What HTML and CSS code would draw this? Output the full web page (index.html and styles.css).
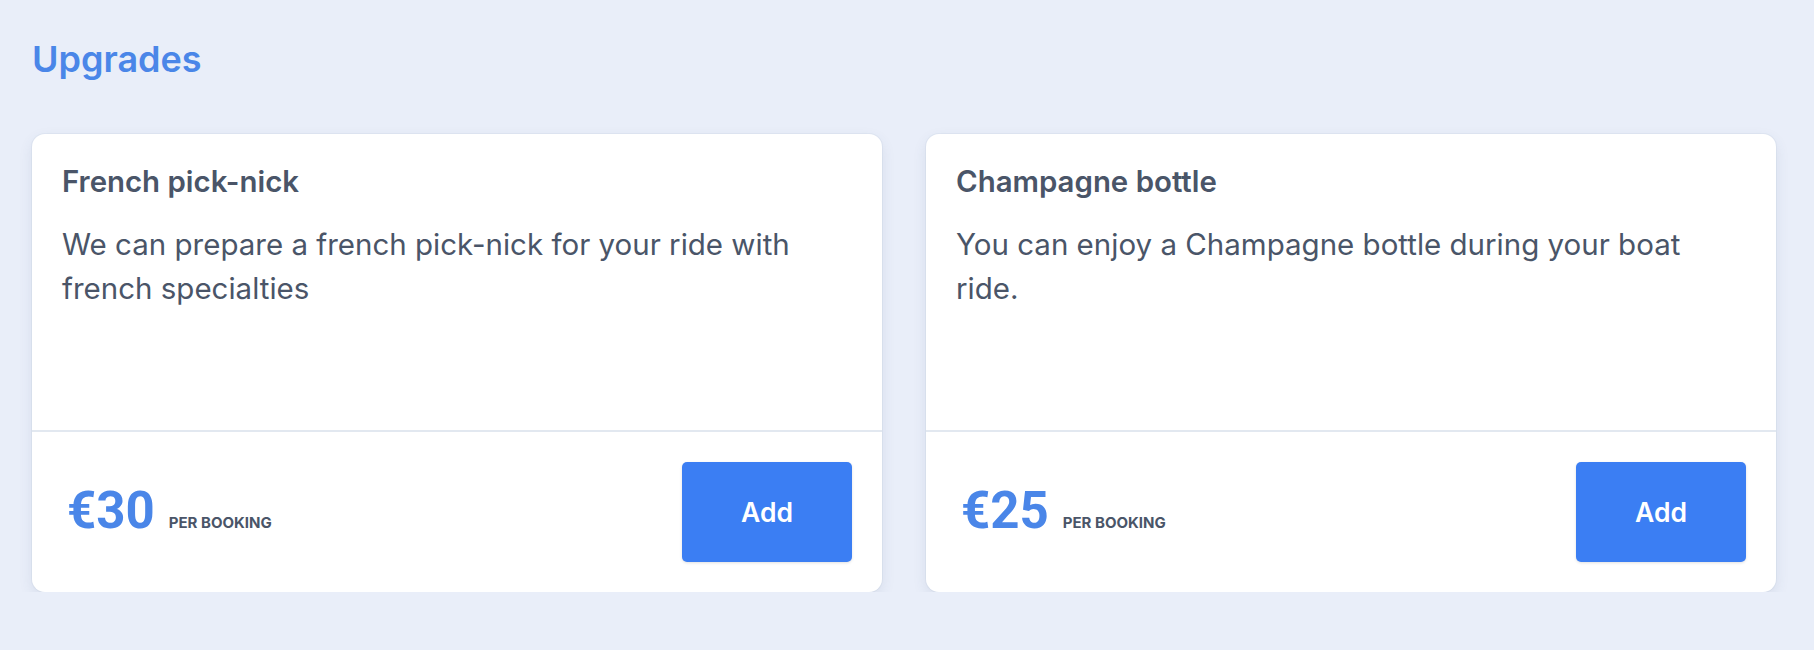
FILE: index.html
```html
<!DOCTYPE html>
<html lang="en">
<head>
<meta charset="utf-8">
<title>Upgrades</title>
<link rel="stylesheet" href="styles.css">
</head>
<body>
<main class="page">
  <h1 class="heading">Upgrades</h1>
  <div class="grid">
    <section class="card">
      <div class="card-body">
        <h2 class="card-title">French pick-nick</h2>
        <p class="card-desc">We can prepare a french pick-nick for your ride with french specialties</p>
      </div>
      <div class="card-footer">
        <div class="price"><span class="amount">€30</span><span class="unit">PER BOOKING</span></div>
        <button class="btn">Add</button>
      </div>
    </section>
    <section class="card">
      <div class="card-body">
        <h2 class="card-title">Champagne bottle</h2>
        <p class="card-desc">You can enjoy a Champagne bottle during your boat ride.</p>
      </div>
      <div class="card-footer">
        <div class="price"><span class="amount">€25</span><span class="unit">PER BOOKING</span></div>
        <button class="btn">Add</button>
      </div>
    </section>
  </div>
</main>
</body>
</html>
```
FILE: styles.css
```css
* { box-sizing: border-box; }
html, body { margin: 0; padding: 0; }
body {
  background: #e9eef9;
  font-family: Inter, Roboto, "Liberation Sans", Arial, sans-serif;
  color: #4a5568;
}
.page {
  padding: 38px 38px 0 32px;
}
.heading {
  margin: 0;
  font-size: 36px;
  line-height: 43px;
  font-weight: 600;
  color: #4a86e8;
}
.grid {
  margin-top: 53px;
  display: grid;
  grid-template-columns: 850px 850px;
  column-gap: 44px;
}
.card {
  background: #fff;
  border-radius: 13px;
  box-shadow: 0 5px 14px rgba(60, 80, 120, 0.10), 0 0 0 1px rgba(210, 218, 232, 0.35);
  overflow: hidden;
}
.card-body {
  height: 296px;
  padding: 30px 30px 0 30px;
}
.card-title {
  margin: 0;
  font-size: 29.4px;
  line-height: 36px;
  font-weight: 600;
  color: #4a5568;
}
.card-desc {
  margin: 22px 0 0 0;
  font-size: 29.5px;
  line-height: 44px;
  font-weight: 400;
  color: #4a5568;
}
.card-footer {
  border-top: 2px solid #e2e8f0;
  padding: 30px;
  display: flex;
  align-items: center;
  justify-content: space-between;
}
.price {
  display: flex;
  align-items: baseline;
  padding-left: 5px;
  padding-bottom: 4px;
}
.amount {
  font-family: Roboto, Inter, "Liberation Sans", Arial, sans-serif;
  font-size: 51px;
  line-height: 1;
  font-weight: 700;
  color: #4a86e8;
}
.unit {
  margin-left: 14px;
  font-size: 15px;
  font-weight: 700;
  color: #4a5568;
}
.btn {
  width: 170px;
  height: 100px;
  border: none;
  border-radius: 5px;
  background: #3b7ef3;
  color: #fff;
  font-family: inherit;
  font-size: 26.5px;
  font-weight: 600;
  box-shadow: 0 1px 3px rgba(0, 0, 0, 0.12);
  cursor: pointer;
}
```
